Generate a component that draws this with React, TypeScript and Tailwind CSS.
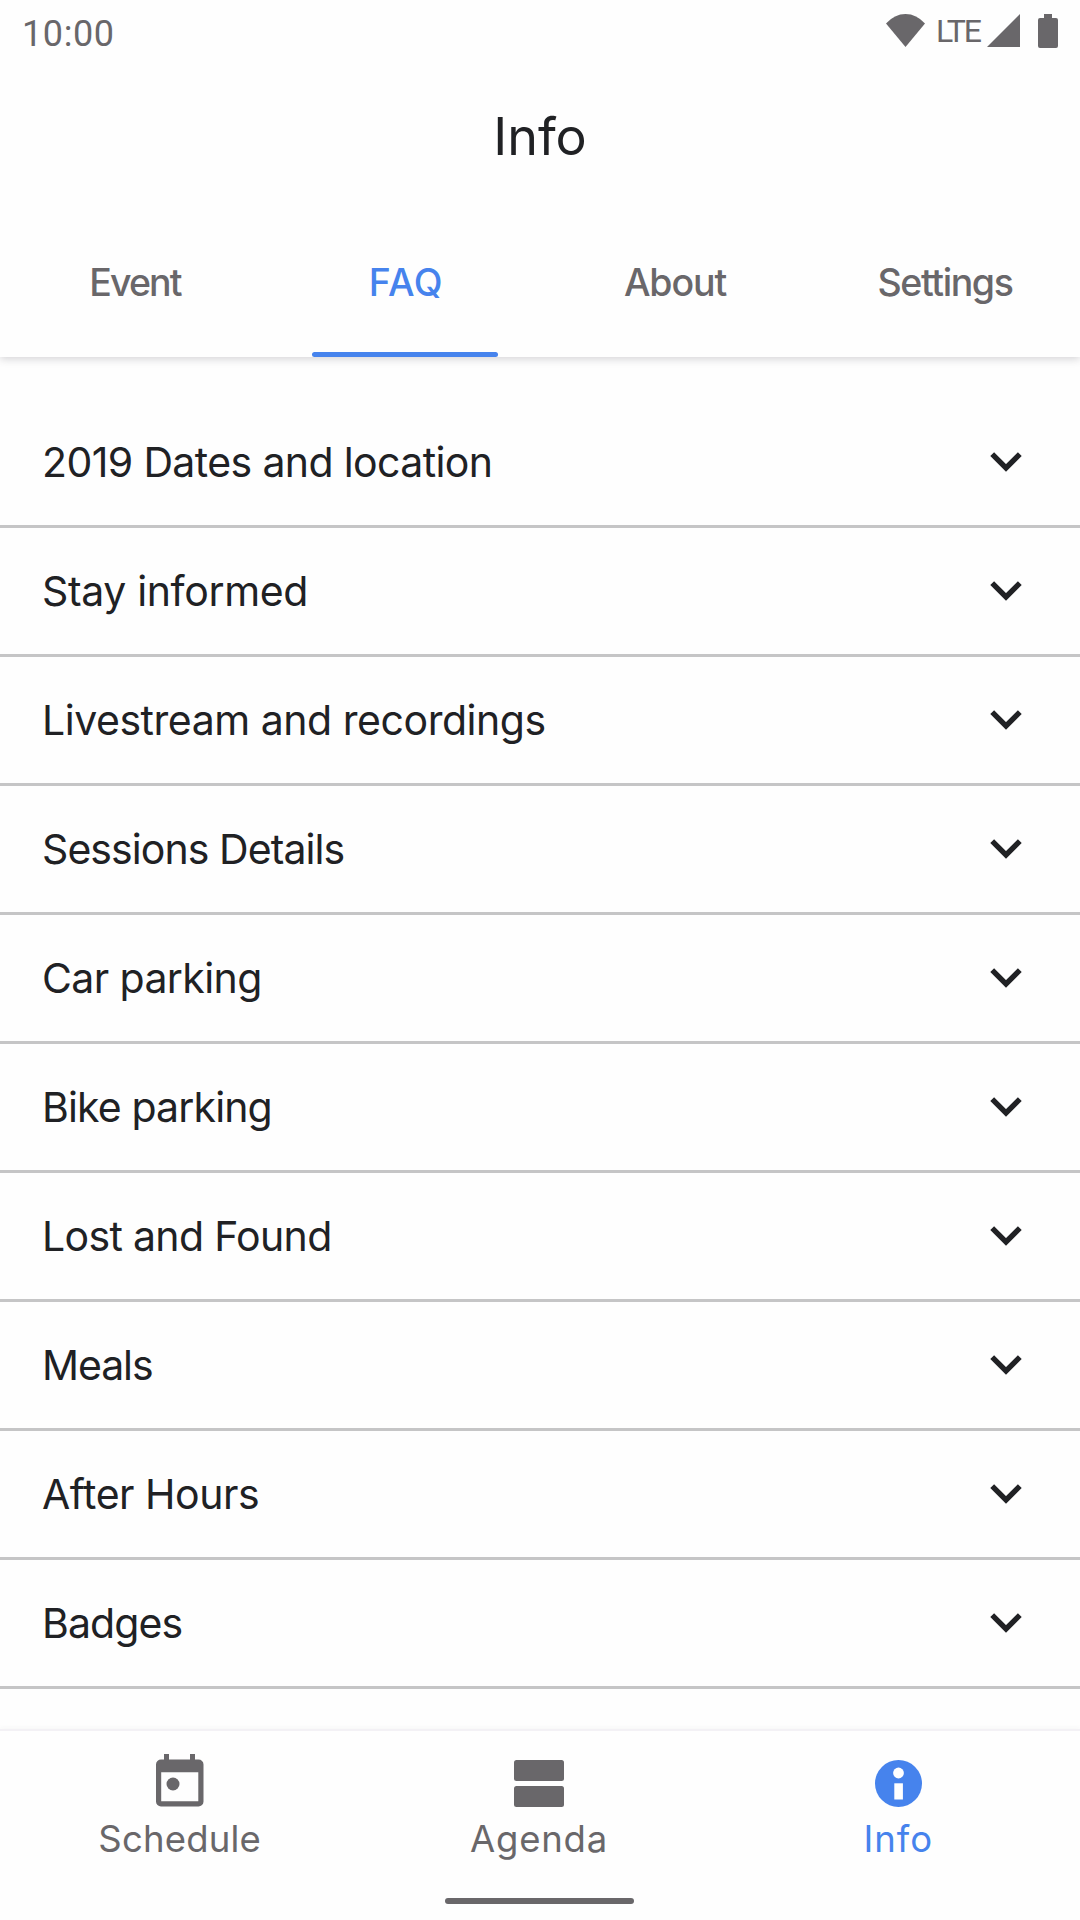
import React from "react";
import clsx from "clsx";

const tabs = [
  { label: "Event", className: "tracking-[-1.9px]" },
  { label: "FAQ", className: "tracking-[0.6px] pl-[2px]", active: true },
  { label: "About", className: "tracking-[-1.1px]" },
  { label: "Settings", className: "tracking-[-1.4px]" },
];

const questions = [
  { title: "2019 Dates and location", className: "tracking-[-0.62px]" },
  { title: "Stay informed", className: "tracking-[-0.35px]" },
  { title: "Livestream and recordings", className: "tracking-[-0.46px]" },
  { title: "Sessions Details", className: "tracking-[-0.92px]" },
  { title: "Car parking", className: "tracking-[-0.6px]" },
  { title: "Bike parking", className: "tracking-[-0.86px]" },
  { title: "Lost and Found", className: "tracking-[-0.67px]" },
  { title: "Meals", className: "tracking-[-1.1px]" },
  { title: "After Hours", className: "tracking-[-0.48px]" },
  { title: "Badges", className: "tracking-[-0.9px]" },
];

const ChevronIcon = () => (
  <svg width="32" height="20" viewBox="0 0 32 20" fill="none">
    <path d="M2.2 2.2L16 16L29.8 2.2" stroke="#202124" strokeWidth="5.4" />
  </svg>
);

const ScheduleIcon = () => (
  <svg width="48" height="53" viewBox="0 0 48 53" fill="currentColor">
    <path
      fillRule="evenodd"
      d="M8 0H13V5.5H34V0H39V5.5H42.5A5 5 0 0 1 47.5 10.5V47.5A5 5 0 0 1 42.5 52.5H5A5 5 0 0 1 0 47.5V10.5A5 5 0 0 1 5 5.5H8ZM5.2 18.3V47.3H42.3V18.3Z"
    />
    <circle cx="17" cy="30" r="6.5" />
  </svg>
);

const AgendaIcon = () => (
  <svg width="50" height="47" viewBox="0 0 50 47" fill="currentColor">
    <rect width="50" height="21" rx="2.5" />
    <rect y="26" width="50" height="21" rx="2.5" />
  </svg>
);

const InfoIcon = () => (
  <svg width="47" height="47" viewBox="0 0 47 47">
    <circle cx="23.5" cy="23.5" r="23.5" fill="currentColor" />
    <circle cx="23.5" cy="13" r="5.4" fill="#fff" />
    <rect x="19.3" y="23.3" width="8.6" height="16.2" fill="#fff" />
  </svg>
);

const navItems = [
  { label: "Schedule", icon: <ScheduleIcon />, className: "tracking-[0.2px]" },
  { label: "Agenda", icon: <AgendaIcon />, className: "tracking-[0.76px]" },
  {
    label: "Info",
    icon: <InfoIcon />,
    className: "tracking-[1px]",
    active: true,
  },
];

const StatusBar = () => (
  <div className="flex h-[66px] items-center justify-between pl-[22px] pr-[22px] font-[Roboto,sans-serif] text-[#69676a]">
    <span className="pt-[2px] text-[36px] leading-none tracking-[0.6px]">
      10:00
    </span>
    <div className="flex items-center pb-[5px]">
      <svg width="39" height="33" viewBox="0 0 39 33" fill="currentColor">
        <path d="M0 9.5Q8.5 0 19.5 0T39 9.5L19.5 33Z" />
      </svg>
      <span className="ml-[11px] w-[51px] text-[32px] leading-none tracking-[-2.2px]">
        LTE
      </span>
      <svg width="33" height="33" viewBox="0 0 33 33" fill="currentColor">
        <path d="M0 33L33 0V33Z" />
      </svg>
      <svg
        className="ml-[18px]"
        width="20"
        height="34"
        viewBox="0 0 20 34"
        fill="currentColor"
      >
        <path d="M6 0H14V4H18A2 2 0 0 1 20 6V32A2 2 0 0 1 18 34H2A2 2 0 0 1 0 32V6A2 2 0 0 1 2 4H6Z" />
      </svg>
    </div>
  </div>
);

const App = () => {
  return (
    <div className="flex h-[1920px] w-[1080px] flex-col overflow-hidden bg-[#fefefe] font-[Inter,sans-serif] text-[#202124]">
      <header className="shrink-0 shadow-[0_2px_8px_rgba(60,55,70,0.22)]">
        <StatusBar />
        <h1 className="flex h-[140px] items-center justify-center pt-[2px] text-[52px] leading-none">
          Info
        </h1>
        <div className="grid h-[151px] grid-cols-4">
          {tabs.map((tab) => (
            <div
              key={tab.label}
              className={clsx(
                "flex flex-col items-center text-[37.5px] font-medium leading-none",
                tab.active ? "text-[#4683ed]" : "text-[#69676a]"
              )}
            >
              <span className={clsx("mt-[58px]", tab.className)}>
                {tab.label}
              </span>
              {tab.active && (
                <span className="mt-auto h-[5px] w-[186px] rounded-full bg-[#4683ed]" />
              )}
            </div>
          ))}
        </div>
      </header>

      <main className="flex-1 pt-[42px]">
        {questions.map((question) => (
          <div
            key={question.title}
            className="flex h-[129px] items-center justify-between border-b-3 border-[#c5c5c6] pl-[42px] pr-[58px]"
          >
            <span
              className={clsx("text-[41px] leading-none", question.className)}
            >
              {question.title}
            </span>
            <ChevronIcon />
          </div>
        ))}
      </main>

      <nav className="flex h-[191px] shrink-0 flex-col items-center border-t-2 border-[#f3f1f5] pr-[2px] shadow-[0_-2px_4px_rgba(60,55,70,0.03)]">
        <div className="grid w-full grid-cols-3">
          {navItems.map((item) => (
            <div
              key={item.label}
              className={clsx(
                "flex flex-col items-center",
                item.active ? "text-[#4683ed]" : "text-[#69676a]"
              )}
            >
              <div className="flex h-[76px] items-end">{item.icon}</div>
              <span
                className={clsx(
                  "mt-[14px] text-[36.5px] leading-none",
                  item.className
                )}
              >
                {item.label}
              </span>
            </div>
          ))}
        </div>
        <span className="mb-4 mt-auto h-[6px] w-[189px] rounded-full bg-[#69676a]" />
      </nav>
    </div>
  );
};

export default App;
